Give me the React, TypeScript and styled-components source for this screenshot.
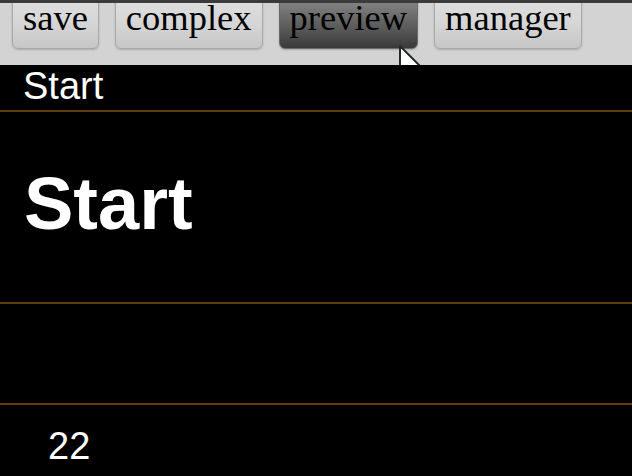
import styled, { createGlobalStyle } from 'styled-components';

const GlobalStyle = createGlobalStyle`
  html, body {
    margin: 0;
    padding: 0;
    background: #000;
  }
  body {
    width: 632px;
    height: 476px;
    overflow: hidden;
    font-family: 'Liberation Sans', Arial, sans-serif;
    font-size: 38px;
    color: #fff;
  }
`;

const buttons = ['save', 'complex', 'preview', 'manager'];

const App = () => {
  return (
    <>
      <GlobalStyle />
      <Page>
        <Toolbar>
          {buttons.map((label) => (
            <ToolButton key={label} $active={label === 'preview'}>
              {label}
            </ToolButton>
          ))}
          <Cursor width="26" height="40" viewBox="0 0 13 20">
            <path
              d="M0.5 0.5 L0.5 16.5 L4.3 12.8 L7 19.3 L9.6 18.2 L7 12 L12 12 Z"
              fill="#fff"
              stroke="#1f2a2a"
              strokeWidth="1"
              strokeLinejoin="round"
            />
          </Cursor>
        </Toolbar>
        <Header>Start</Header>
        <Divider />
        <TitleSection>
          <Title>Start</Title>
        </TitleSection>
        <Divider />
        <EmptySection />
        <Divider />
        <Footer>22</Footer>
      </Page>
    </>
  );
};

export default App;

const Page = styled.div`
  display: flex;
  flex-direction: column;
  width: 632px;
  height: 476px;
  background: #000;
`;

const Toolbar = styled.div`
  position: relative;
  display: flex;
  align-items: flex-start;
  gap: 16px;
  height: 62px;
  padding-left: 12px;
  border-top: 3px solid #3b3b3b;
  background: #d3d3d3;
  overflow: hidden;
  flex-shrink: 0;
`;

const ToolButton = styled.button<{ $active?: boolean }>`
  margin-top: -17px;
  padding: 10px 10px;
  border: 1px solid ${(p) => (p.$active ? '#6a6a6a' : '#a8a8a8')};
  border-radius: 6px;
  font-family: 'Liberation Serif', 'Times New Roman', serif;
  font-size: 36.5px;
  line-height: 41px;
  color: #000;
  background: ${(p) =>
    p.$active
      ? 'linear-gradient(to bottom, #9a9a9a 0%, #6a6a6a 50%, #3a3a3a 100%)'
      : 'linear-gradient(to bottom, #e2e2e2 0%, #d6d6d6 60%, #c6c6c6 100%)'};
  box-shadow: 0 1px 2px rgba(0, 0, 0, 0.2);
  cursor: default;
`;

const Cursor = styled.svg`
  position: absolute;
  left: 399px;
  top: 42px;
  z-index: 2;
`;

const Header = styled.div`
  height: 45px;
  padding-left: 23px;
  line-height: 42px;
  flex-shrink: 0;
`;

const Divider = styled.div`
  height: 2px;
  background: #633b12;
  flex-shrink: 0;
`;

const TitleSection = styled.div`
  height: 190px;
  padding: 50px 0 0 24px;
  box-sizing: border-box;
  flex-shrink: 0;
`;

const Title = styled.h1`
  margin: 0;
  font-size: 74px;
  font-weight: 700;
  line-height: 84px;
`;

const EmptySection = styled.div`
  height: 99px;
  flex-shrink: 0;
`;

const Footer = styled.div`
  padding: 20px 0 0 48px;
  line-height: 42px;
`;
